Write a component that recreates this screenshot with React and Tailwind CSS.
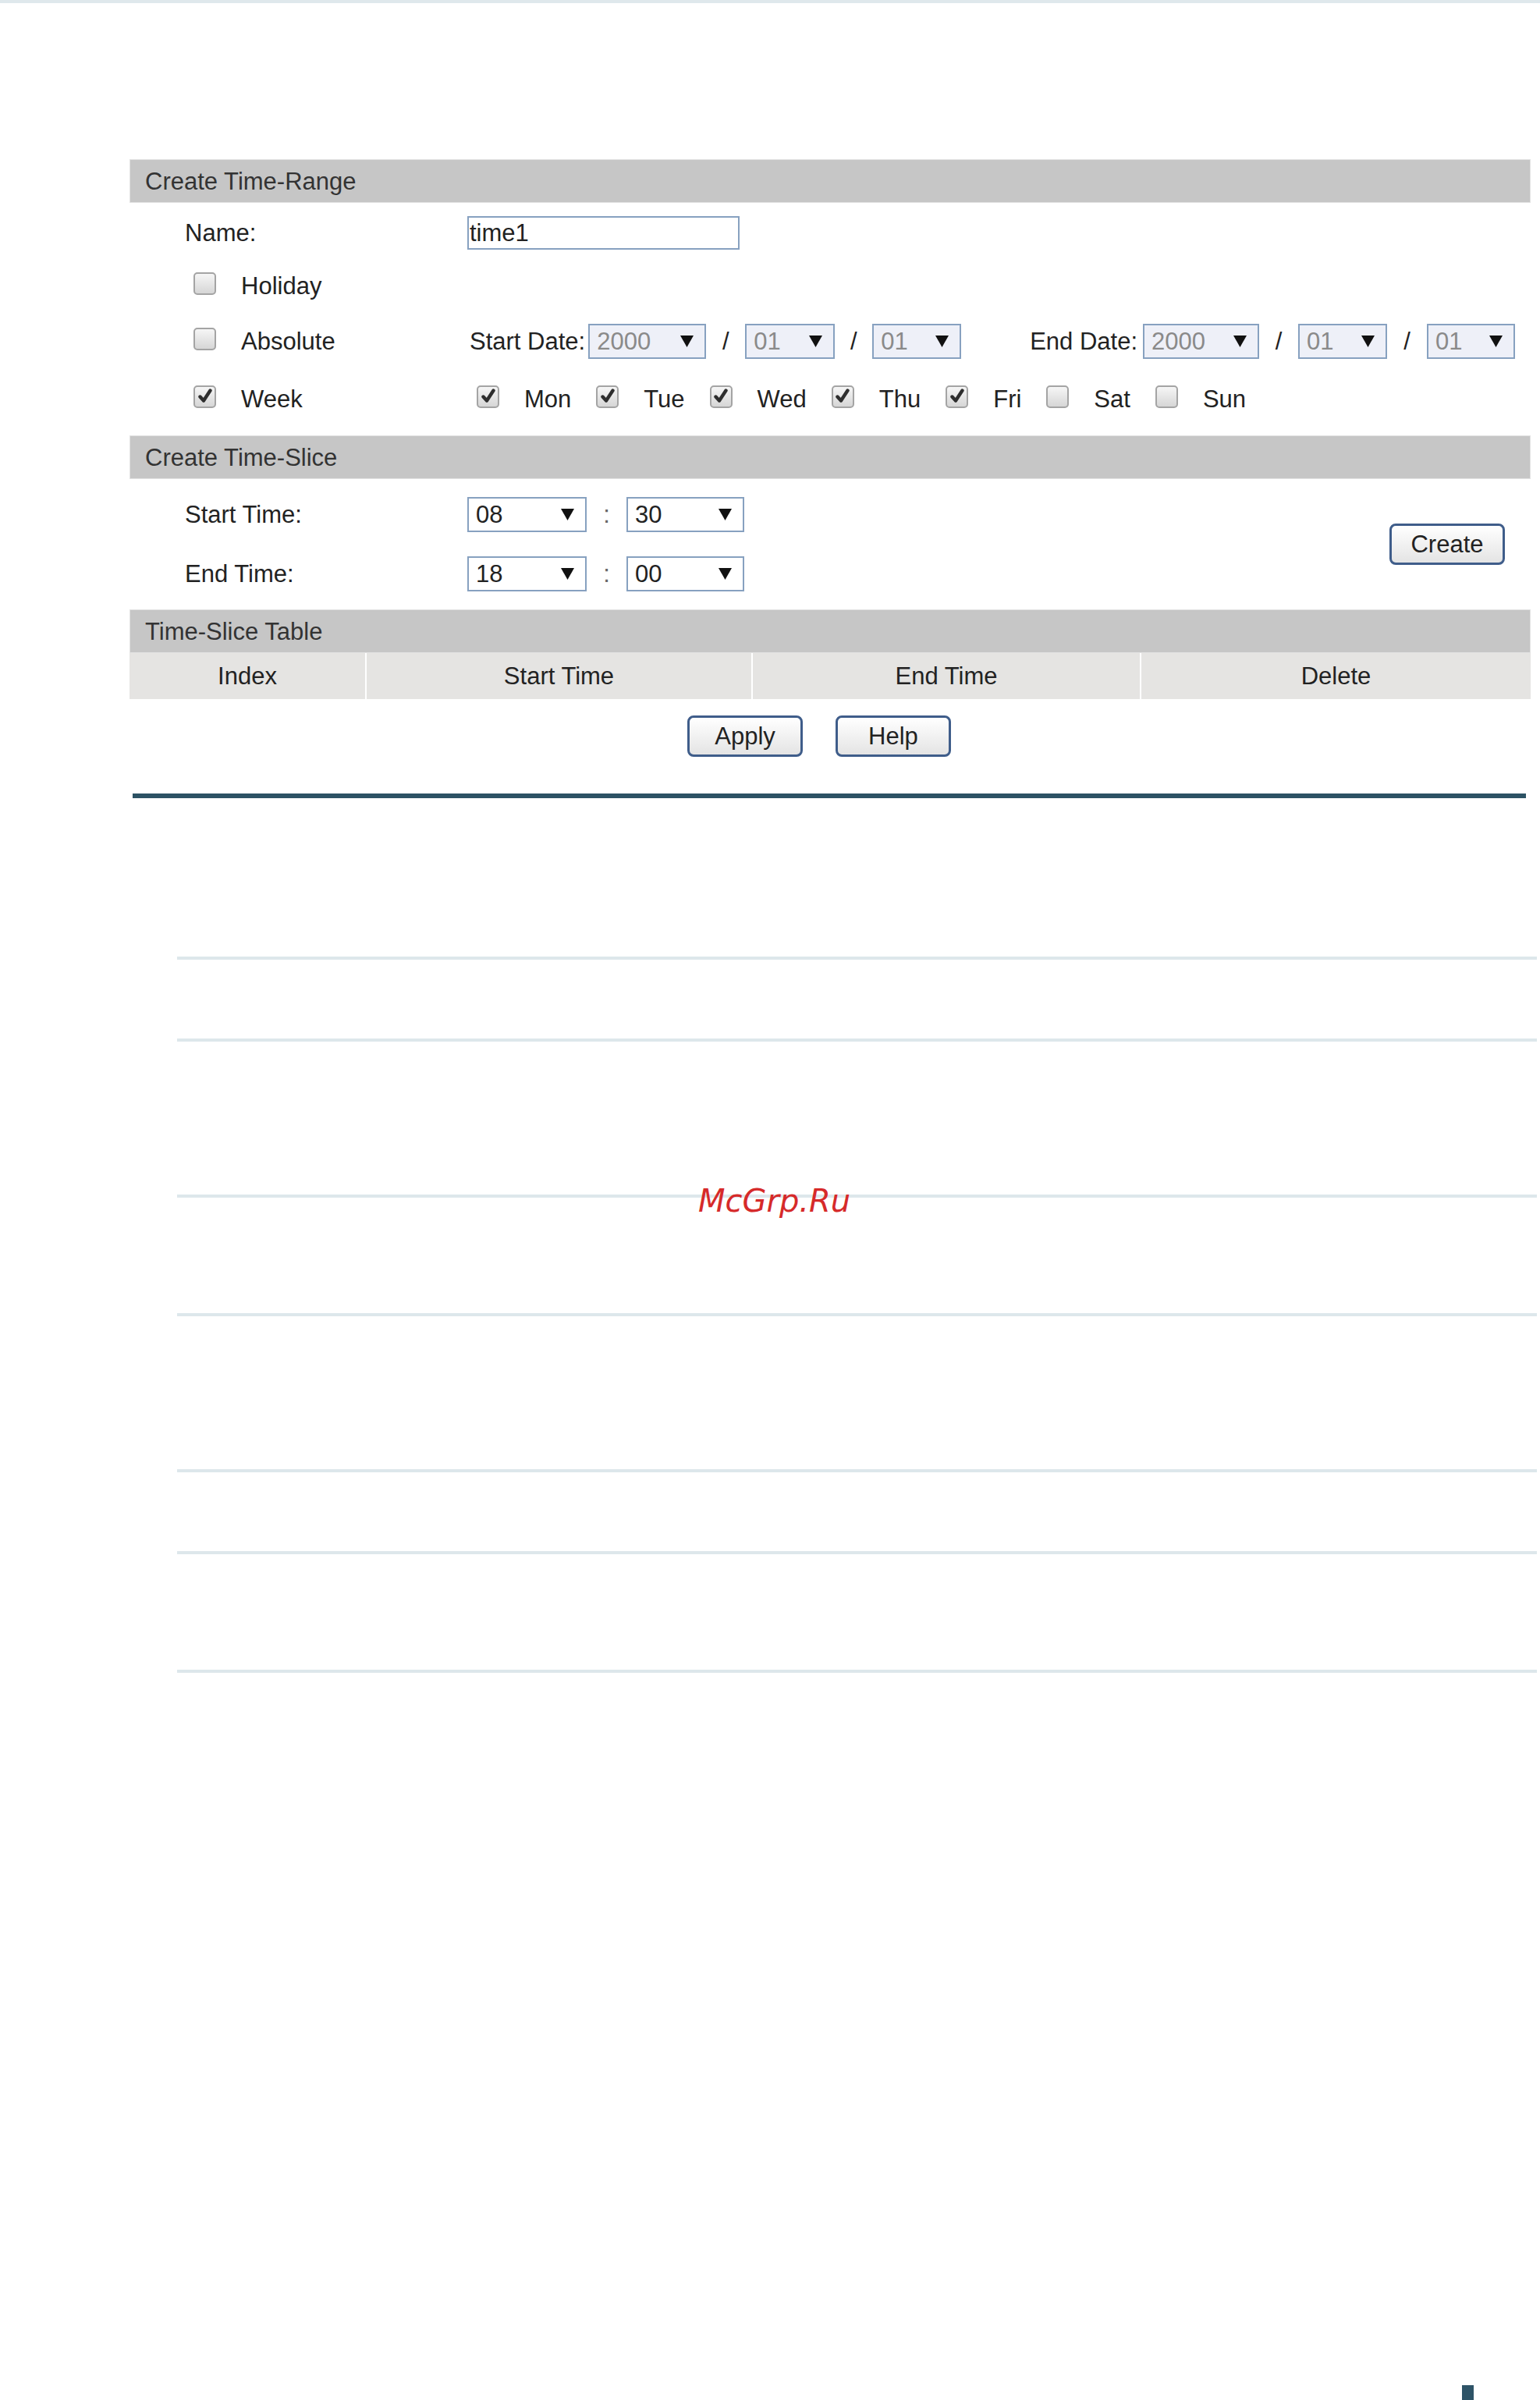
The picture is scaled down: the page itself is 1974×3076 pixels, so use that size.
const font = { fontFamily: '"Liberation Sans", Arial, sans-serif' };

function Arrow() {
  return (
    <svg width="17" height="15" viewBox="0 0 17 15" className="shrink-0">
      <path d="M0 0 H17 L8.5 15 Z" fill="#111" />
    </svg>
  );
}

function Select({ value, width, disabled }) {
  return (
    <div
      className={`flex items-center justify-between h-[45px] border-2 border-[#87a1c0] pl-[9px] pr-[14px] ${
        disabled ? "bg-[#eef0f8] text-[#8a8a8a]" : "bg-white text-[#222]"
      } ${width}`}
    >
      <span>{value}</span>
      <Arrow />
    </div>
  );
}

function Check({ checked }) {
  return (
    <span className="mb-[6px] flex items-center justify-center w-[29px] h-[29px] shrink-0 rounded-[5px] border-2 border-[#a4a4a4] bg-linear-to-b from-[#f6f6f6] to-[#d6d6d6]">
      {checked && (
        <svg width="20" height="20" viewBox="0 0 20 20">
          <path d="M3.5 10.5 L8 15.5 L16.5 2.5" fill="none" stroke="#2e2e2e" strokeWidth="4.4" strokeLinejoin="round" strokeLinecap="round" />
        </svg>
      )}
    </span>
  );
}

function Bar({ title }) {
  return (
    <div className="h-[56px] flex items-center pl-[19px] bg-[#c6c6c6] border border-[#e2e2e2] text-[#333]">
      {title}
    </div>
  );
}

function Button({ children, width }) {
  return (
    <button
      className={`h-[53px] ${width} rounded-[8px] border-[3px] border-[#3f5d8a] bg-linear-to-b from-white to-[#e4e4e4] text-[#222] text-[31px]`}
      style={font}
    >
      {children}
    </button>
  );
}

const days = [
  { d: "Mon", c: true },
  { d: "Tue", c: true },
  { d: "Wed", c: true },
  { d: "Thu", c: true },
  { d: "Fri", c: true },
  { d: "Sat", c: false },
  { d: "Sun", c: false },
];

export default function App() {
  return (
    <div className="relative w-full h-[3076px] bg-white text-[31px] leading-none text-[#222]" style={font}>
      <div className="h-[4px] bg-[#dfe8ec]" />

      <div className="ml-[166px] mt-[200px] w-[1796px]">
        {/* CREATE TIME-RANGE */}
        <Bar title="Create Time-Range" />

        <div className="flex items-center h-[76px]">
          <div className="w-[433px] pl-[71px]">Name:</div>
          <div className="w-[349px] h-[43px] border-2 border-[#87a1c0] flex items-center pl-[1px]">time1</div>
        </div>

        <div className="flex items-center h-[60px]">
          <div className="w-[433px] pl-[82px] flex items-center gap-[32px]">
            <Check />
            <span>Holiday</span>
          </div>
        </div>

        <div className="flex items-center h-[82px]">
          <div className="w-[433px] pl-[82px] flex items-center gap-[32px]">
            <Check />
            <span>Absolute</span>
          </div>
          <span className="ml-[3px]">Start Date:</span>
          <div className="ml-[4px]">
            <Select value="2000" width="w-[151px]" disabled />
          </div>
          <span className="w-[50px] text-center">/</span>
          <Select value="01" width="w-[115px]" disabled />
          <span className="w-[48px] text-center">/</span>
          <Select value="01" width="w-[114px]" disabled />
          <span className="ml-[88px]">End Date:</span>
          <div className="ml-[7px]">
            <Select value="2000" width="w-[149px]" disabled />
          </div>
          <span className="w-[50px] text-center">/</span>
          <Select value="01" width="w-[114px]" disabled />
          <span className="w-[51px] text-center">/</span>
          <Select value="01" width="w-[113px]" disabled />
        </div>

        <div className="flex items-center h-[66px]">
          <div className="w-[433px] pl-[82px] flex items-center gap-[32px]">
            <Check checked />
            <span>Week</span>
          </div>
          <div className="ml-[12px] flex items-center gap-[32px]">
            {days.map((x) => (
              <div key={x.d} className="flex items-center gap-[32px]">
                <Check checked={x.c} />
                <span>{x.d}</span>
              </div>
            ))}
          </div>
        </div>

        <div className="h-[14px]" />

        {/* CREATE TIME-SLICE */}
        <Bar title="Create Time-Slice" />

        <div className="flex items-center h-[167px]">
          <div className="flex-1 flex flex-col gap-[31px]">
            <div className="flex items-center">
              <div className="w-[433px] pl-[71px]">Start Time:</div>
              <Select value="08" width="w-[153px]" />
              <span className="w-[51px] text-center text-[#666]">:</span>
              <Select value="30" width="w-[151px]" />
            </div>
            <div className="flex items-center">
              <div className="w-[433px] pl-[71px]">End Time:</div>
              <Select value="18" width="w-[153px]" />
              <span className="w-[51px] text-center text-[#666]">:</span>
              <Select value="00" width="w-[151px]" />
            </div>
          </div>
          <div className="mr-[33px]">
            <Button width="w-[148px]">Create</Button>
          </div>
        </div>

        {/* TIME-SLICE TABLE */}
        <Bar title="Time-Slice Table" />
        <div className="flex h-[59px] bg-[#e5e4e2] text-[#222]">
          <div className="w-[304px] border-r-2 border-white flex items-center justify-center">Index</div>
          <div className="w-[495px] border-r-2 border-white flex items-center justify-center">Start Time</div>
          <div className="w-[498px] border-r-2 border-white flex items-center justify-center">End Time</div>
          <div className="flex-1 flex items-center justify-center">Delete</div>
        </div>

        <div className="flex justify-center gap-[42px] pr-[28px] mt-[21px]">
          <Button width="w-[148px]">Apply</Button>
          <Button width="w-[148px]">Help</Button>
        </div>
      </div>

      <div className="ml-[170px] mt-[47px] w-[1786px] h-[6px] bg-[#2c5264]" />

      {/* RULED LINES */}
      <div className="ml-[227px] w-[1743px]">
        <div className="mt-[203px] h-[4px] bg-[#dde7eb]" />
        <div className="mt-[101px] h-[4px] bg-[#dde7eb]" />
        <div className="mt-[196px] h-[4px] bg-[#dde7eb]" />
        <div className="mt-[148px] h-[4px] bg-[#dde7eb]" />
        <div className="mt-[196px] h-[4px] bg-[#dde7eb]" />
        <div className="mt-[101px] h-[4px] bg-[#dde7eb]" />
        <div className="mt-[148px] h-[4px] bg-[#dde7eb]" />
      </div>

      <div
        className="absolute left-[895px] top-[1519px] text-[40px] leading-none italic text-[#d62a2a]"
        style={{ fontFamily: '"DejaVu Sans", sans-serif' }}
      >
        McGrp.Ru
      </div>

      <div className="absolute left-[1874px] top-[3057px] w-[15px] h-[19px] bg-[#2e5467]" />
    </div>
  );
}
